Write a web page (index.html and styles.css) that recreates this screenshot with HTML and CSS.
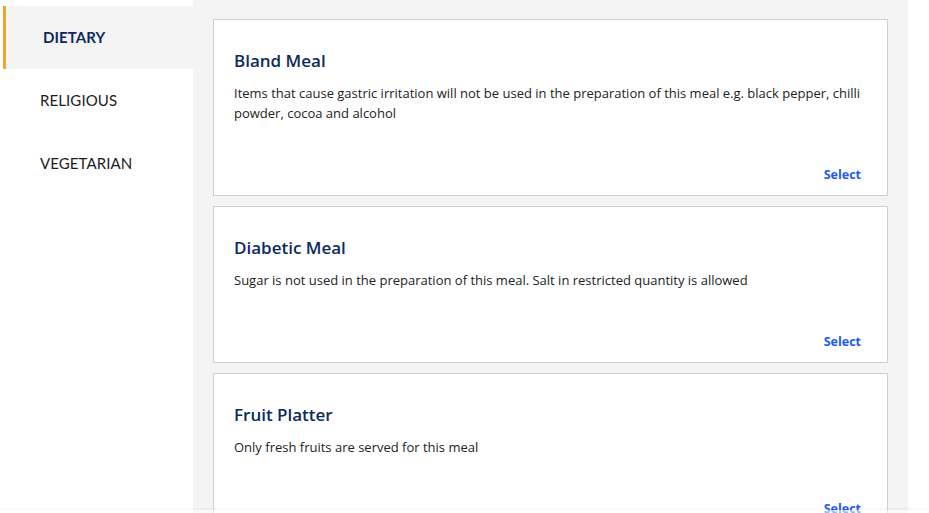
FILE: index.html
```html
<!DOCTYPE html>
<html>
<head>
<meta charset="utf-8">
<link rel="stylesheet" href="styles.css">
</head>
<body>
<div class="page">
  <nav class="sidebar">
    <div class="nav-item active">DIETARY</div>
    <div class="nav-item">RELIGIOUS</div>
    <div class="nav-item">VEGETARIAN</div>
  </nav>
  <main class="main">
    <div class="card">
      <h2 class="card-title">Bland Meal</h2>
      <p class="card-desc">Items that cause gastric irritation will not be used in the preparation of this meal e.g. black pepper, chilli powder, cocoa and alcohol</p>
      <div class="card-actions"><a class="select">Select</a></div>
    </div>
    <div class="card">
      <h2 class="card-title">Diabetic Meal</h2>
      <p class="card-desc">Sugar is not used in the preparation of this meal. Salt in restricted quantity is allowed</p>
      <div class="card-actions"><a class="select">Select</a></div>
    </div>
    <div class="card">
      <h2 class="card-title">Fruit Platter</h2>
      <p class="card-desc">Only fresh fruits are served for this meal</p>
      <div class="card-actions"><a class="select">Select</a></div>
    </div>
  </main>
  <div class="spacer"></div>
</div>
<div class="bottom-bar"></div>
</body>
</html>
```
FILE: styles.css
```css
* { box-sizing: border-box; }
html, body { margin: 0; padding: 0; height: 100%; overflow: hidden; }
body {
  font-family: "Lato", "Open Sans", sans-serif;
  background: #ffffff;
  color: #222222;
}
.page {
  display: flex;
  height: 513px;
}
.sidebar {
  width: 193px;
  flex: none;
  padding: 6px 0 0 3px;
  background: #ffffff;
}
.nav-item {
  height: 63px;
  display: flex;
  align-items: center;
  padding-left: 34px;
  padding-bottom: 2px;
  border-left: 3px solid transparent;
  font-size: 15px;
  color: #1b1b1b;
  letter-spacing: 0.1px;
}
.nav-item.active {
  background: #f4f4f4;
  border-left-color: #f5a524;
  font-weight: 700;
  color: #0e2a5c;
  padding-left: 37px;
}
.main {
  width: 715px;
  flex: none;
  background: #f4f4f4;
  padding: 19px 20px 0 20px;
  display: flex;
  flex-direction: column;
  gap: 10px;
}
.spacer { flex: 1; background: #ffffff; }
.card {
  background: #ffffff;
  border: 1px solid #cfcfcf;
  padding: 30px 26px 11px 20px;
  flex: none;
  font-family: "Open Sans", sans-serif;
}
.card-title {
  margin: 0;
  font-size: 17px;
  line-height: 22px;
  font-weight: 600;
  color: #0e2a5c;
}
.card-desc {
  margin: 11px 0 0 0;
  font-size: 13px;
  line-height: 20px;
  color: #222222;
}
.card-actions {
  margin-top: 43px;
  display: flex;
  justify-content: flex-end;
}
.select {
  font-size: 12.5px;
  line-height: 18px;
  font-weight: 700;
  color: #2159f2;
  cursor: pointer;
}
.bottom-bar {
  position: fixed;
  left: 0;
  right: 0;
  bottom: 0;
  height: 3px;
  background: rgba(255,255,255,0.55);
  box-shadow: 0 -1px 3px rgba(0,0,0,0.06);
}
```
